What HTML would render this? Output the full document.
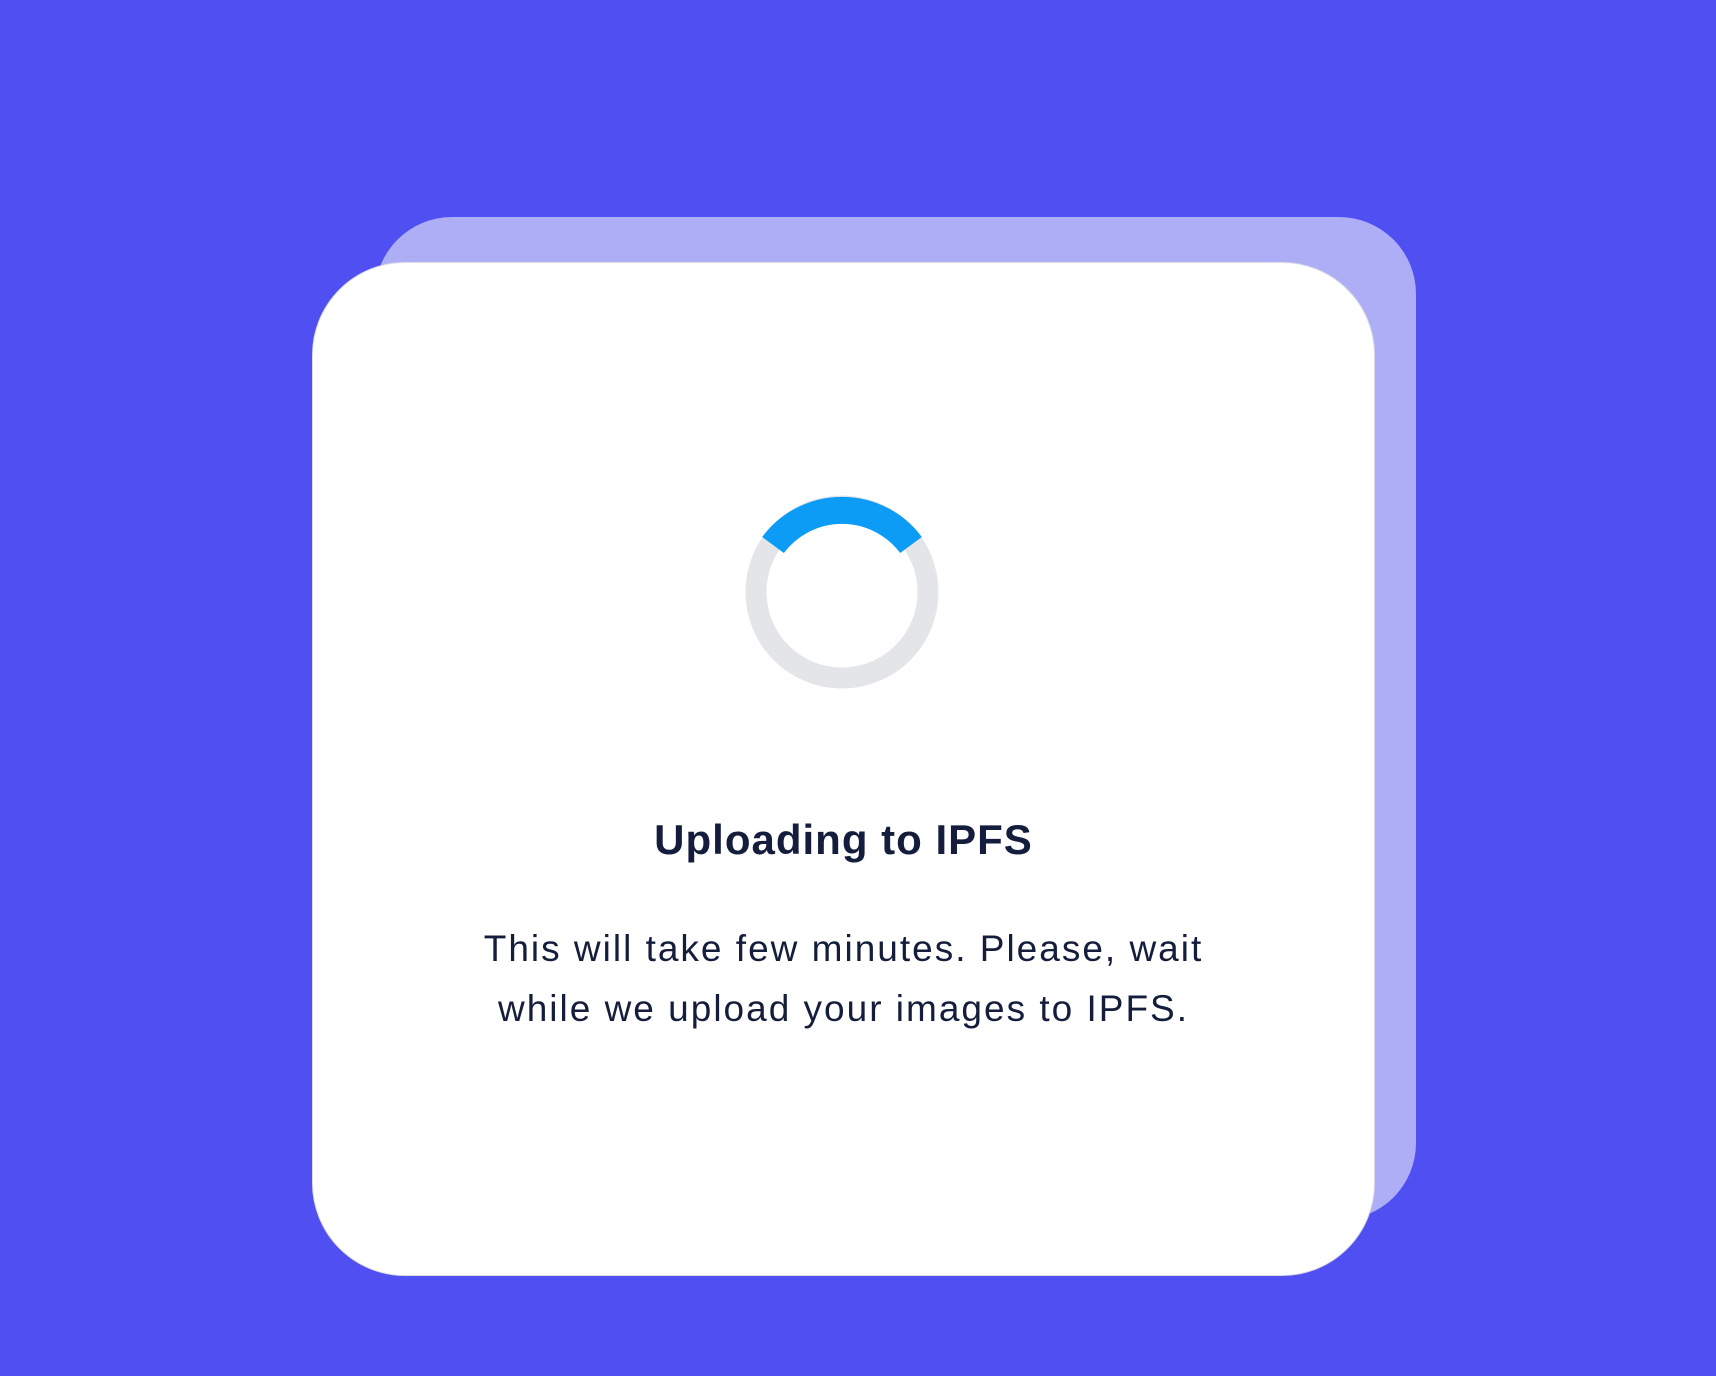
<!DOCTYPE html>
<html><head><meta charset="utf-8"><style>
html,body{margin:0;padding:0;width:1716px;height:1376px;overflow:hidden;background:#4f4ff2;font-family:"Liberation Sans",sans-serif;}
.back{position:absolute;left:375px;top:217px;width:1041px;height:1003px;background:#aeaef6;border-radius:77px;}
.front{position:absolute;left:312px;top:262px;width:1061px;height:1012px;background:#fff;border-radius:93px;border:1px solid #dcdce6;}
h1{position:absolute;left:312px;width:1063px;top:816px;margin:0;text-align:center;font-size:42px;font-weight:bold;color:#141e3c;letter-spacing:1px;}
p{position:absolute;left:312px;width:1063px;top:919px;margin:0;text-align:center;font-size:37px;line-height:60px;color:#141e3c;letter-spacing:2px;}
svg{position:absolute;left:0;top:0;}
</style></head><body>
<div class="back"></div>
<div class="front"></div>
<svg width="1716" height="1376">
<circle cx="842" cy="592" r="86" fill="none" stroke="#e4e5e8" stroke-width="21"/>
<path d="M773 545 A86 86 0 0 1 911 545" fill="none" stroke="#0c9cf6" stroke-width="27"/>
</svg>
<h1>Uploading to IPFS</h1>
<p>This will take few minutes. Please, wait<br>while we upload your images to IPFS.</p>
</body></html>
